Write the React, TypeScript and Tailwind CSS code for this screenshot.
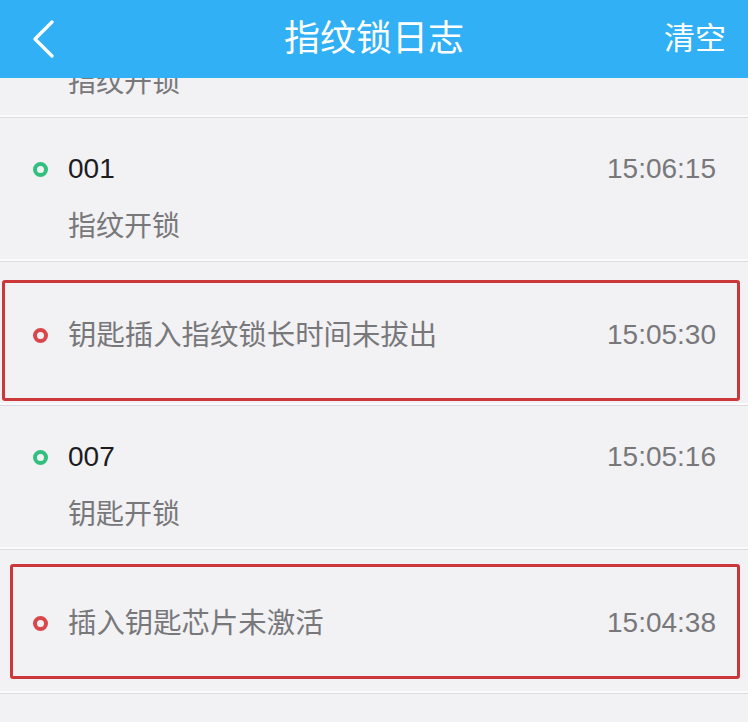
type LogEntry = {
  id: string;
  title?: string;
  desc: string;
  time: string;
  alarm?: boolean;
  flagged?: "wide" | "narrow";
};

const LOGS: LogEntry[] = [
  { id: "a", title: "002", desc: "指纹开锁", time: "15:07:02" },
  { id: "b", title: "001", desc: "指纹开锁", time: "15:06:15" },
  { id: "c", desc: "钥匙插入指纹锁长时间未拔出", time: "15:05:30", alarm: true, flagged: "wide" },
  { id: "d", title: "007", desc: "钥匙开锁", time: "15:05:16" },
  { id: "e", desc: "插入钥匙芯片未激活", time: "15:04:38", alarm: true, flagged: "narrow" },
];

function Dot({ alarm }: { alarm?: boolean }) {
  return (
    <span
      className={
        "box-border block h-[15px] w-[15px] shrink-0 rounded-full border-[4.5px] " +
        (alarm ? "border-[#d9474d]" : "border-[#33bf7d]")
      }
    />
  );
}

function LogRow({ entry }: { entry: LogEntry }) {
  return (
    <div className="relative h-[144px] border-b border-[#dcdbe0] shadow-[inset_0_-2px_0_#fbfbfc]">
      {entry.title ? (
        <div className="flex flex-col pl-[33px] pr-[32px] pt-[31px]">
          <div className="flex h-[40px] items-center">
            <Dot />
            <span className="ml-[20px] flex-1 text-[28px] text-[#1c1c1c]">{entry.title}</span>
            <span className="text-[28px] text-[#78787b]">{entry.time}</span>
          </div>
          <div className="mt-[18px] flex h-[40px] items-center pl-[35px] text-[28px] text-[#78787b]">
            {entry.desc}
          </div>
        </div>
      ) : (
        <div className="flex h-[143px] items-center pl-[33px] pr-[32px] pt-[3px]">
          <Dot alarm={entry.alarm} />
          <span className="ml-[20px] flex-1 text-[28.4px] text-[#78787b]">{entry.desc}</span>
          <span className="text-[28px] text-[#78787b]">{entry.time}</span>
        </div>
      )}

      {/* red annotation frames drawn over the screenshot */}
      {entry.flagged === "wide" && (
        <div className="absolute left-[2px] top-[18px] h-[121px] w-[738px] rounded-[3px] border-[3px] border-[#cc3839]" />
      )}
      {entry.flagged === "narrow" && (
        <div className="absolute left-[10px] top-[14px] h-[115px] w-[730px] rounded-[3px] border-[3px] border-[#cc3839]" />
      )}
    </div>
  );
}

export default function App() {
  return (
    <div
      className="flex h-[722px] w-[748px] flex-col overflow-hidden bg-[#f2f1f4]"
      style={{ fontFamily: '"Liberation Sans", "Noto Sans CJK SC", sans-serif' }}
    >
      <header className="relative z-10 flex h-[78px] shrink-0 items-center bg-[#31b0f5] text-white">
        <div className="flex w-[120px] items-center pl-[32px]">
          <svg width="24" height="38" viewBox="0 0 24 38" fill="none">
            <polyline
              points="20,2 3,19 20,36"
              stroke="white"
              strokeWidth="3.2"
              strokeLinecap="round"
              strokeLinejoin="round"
            />
          </svg>
        </div>
        <h1 className="flex-1 text-center text-[36px] leading-[46px]">指纹锁日志</h1>
        <div className="flex w-[120px] justify-end pr-[22px]">
          <button type="button" className="text-[31px] leading-[42px]">
            清空
          </button>
        </div>
      </header>

      <div className="flex-1 overflow-hidden">
        <div className="-mt-[104px]">
          {LOGS.map((entry) => (
            <LogRow key={entry.id} entry={entry} />
          ))}
        </div>
      </div>
    </div>
  );
}
